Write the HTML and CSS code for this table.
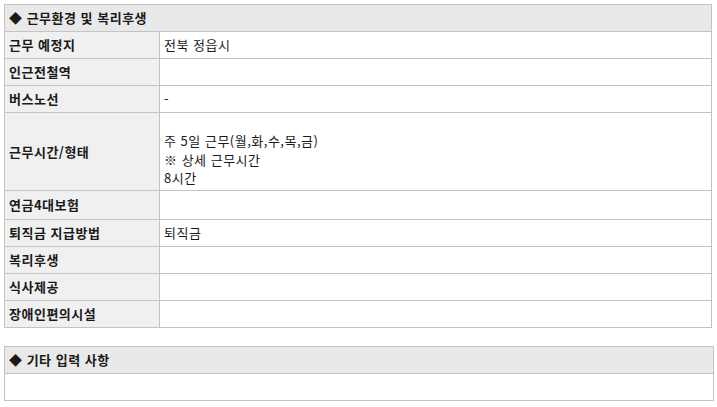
FILE: index.html
```html
<!DOCTYPE html>
<html lang="ko">
<head>
<meta charset="utf-8">
<link rel="stylesheet" href="styles.css">
</head>
<body>
<table class="info first">
  <colgroup><col class="c-label"><col></colgroup>
  <tr><th class="title" colspan="2">◆ 근무환경 및 복리후생</th></tr>
  <tr><th>근무 예정지</th><td>전북 정읍시</td></tr>
  <tr><th>인근전철역</th><td></td></tr>
  <tr><th>버스노선</th><td>-</td></tr>
  <tr><th>근무시간/형태</th><td class="multi"><br>주 5일 근무(월,화,수,목,금)<br>※ 상세 근무시간<br>8시간</td></tr>
  <tr><th class="tall">연금4대보험</th><td></td></tr>
  <tr><th>퇴직금 지급방법</th><td>퇴직금</td></tr>
  <tr><th>복리후생</th><td></td></tr>
  <tr><th>식사제공</th><td></td></tr>
  <tr><th>장애인편의시설</th><td></td></tr>
</table>
<table class="info second">
  <tr><th class="title">◆ 기타 입력 사항</th></tr>
  <tr><td class="empty"></td></tr>
</table>
</body>
</html>
```
FILE: styles.css
```css
html, body {
  margin: 0;
  padding: 0;
  background: #fff;
}
body {
  padding: 4px 5px 0 4px;
  font-family: "Noto Sans CJK KR", "Noto Sans", sans-serif;
  font-size: 13px;
  letter-spacing: 0.5px;
  color: #1a1a1a;
}
.info {
  width: 100%;
  border-collapse: collapse;
  table-layout: fixed;
}
.first {
  width: 708px;
}
.second {
  width: 710px;
  margin-top: 18px;
}
.c-label {
  width: 155px;
}
.info th, .info td {
  border: 1px solid #c3c3c3;
  padding: 0 4px;
  height: 26px;
  line-height: 18px;
  text-align: left;
  vertical-align: middle;
}
.info th {
  background: #f0f0f0;
  font-weight: 700;
}
.info th.title {
  background: #e9e9e9;
}
.info td {
  background: #fff;
  font-weight: 400;
}
.info td.multi {
  height: 75px;
  line-height: 18.5px;
  padding-bottom: 2px;
}
.info th.tall {
  height: 28px;
}
.info td.empty {
  height: 26px;
}
```
